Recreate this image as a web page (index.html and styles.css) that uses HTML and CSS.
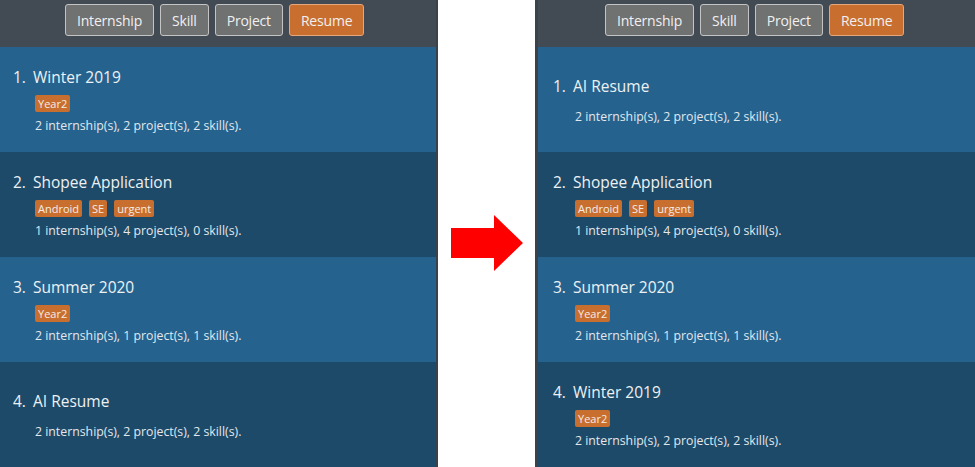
FILE: index.html
```html
<!DOCTYPE html>
<html>
<head>
<meta charset="utf-8">
<link rel="stylesheet" href="styles.css">
</head>
<body>
<div class="page">
  <section class="panel panel-left">
    <nav class="tabs">
      <span class="tab">Internship</span>
      <span class="tab">Skill</span>
      <span class="tab">Project</span>
      <span class="tab active">Resume</span>
    </nav>
    <ul class="list">
      <li class="cell light">
        <div class="title"><span class="num">1.</span>Winter 2019</div>
        <div class="tags"><span class="tag">Year2</span></div>
        <div class="desc">2 internship(s), 2 project(s), 2 skill(s).</div>
      </li>
      <li class="cell dark">
        <div class="title"><span class="num">2.</span>Shopee Application</div>
        <div class="tags"><span class="tag">Android</span><span class="tag">SE</span><span class="tag">urgent</span></div>
        <div class="desc">1 internship(s), 4 project(s), 0 skill(s).</div>
      </li>
      <li class="cell light">
        <div class="title"><span class="num">3.</span>Summer 2020</div>
        <div class="tags"><span class="tag">Year2</span></div>
        <div class="desc">2 internship(s), 1 project(s), 1 skill(s).</div>
      </li>
      <li class="cell dark">
        <div class="title"><span class="num">4.</span>AI Resume</div>
        <div class="desc">2 internship(s), 2 project(s), 2 skill(s).</div>
      </li>
    </ul>
  </section>
  <div class="gap">
    <svg class="arrow" width="72" height="56" viewBox="0 0 72 56"><polygon points="0,13 43,13 43,0 72,28 43,56 43,43 0,43" fill="#ff0000"/></svg>
  </div>
  <section class="panel panel-right">
    <nav class="tabs">
      <span class="tab">Internship</span>
      <span class="tab">Skill</span>
      <span class="tab">Project</span>
      <span class="tab active">Resume</span>
    </nav>
    <ul class="list">
      <li class="cell light">
        <div class="title"><span class="num">1.</span>AI Resume</div>
        <div class="desc">2 internship(s), 2 project(s), 2 skill(s).</div>
      </li>
      <li class="cell dark">
        <div class="title"><span class="num">2.</span>Shopee Application</div>
        <div class="tags"><span class="tag">Android</span><span class="tag">SE</span><span class="tag">urgent</span></div>
        <div class="desc">1 internship(s), 4 project(s), 0 skill(s).</div>
      </li>
      <li class="cell light">
        <div class="title"><span class="num">3.</span>Summer 2020</div>
        <div class="tags"><span class="tag">Year2</span></div>
        <div class="desc">2 internship(s), 1 project(s), 1 skill(s).</div>
      </li>
      <li class="cell dark">
        <div class="title"><span class="num">4.</span>Winter 2019</div>
        <div class="tags"><span class="tag">Year2</span></div>
        <div class="desc">2 internship(s), 2 project(s), 2 skill(s).</div>
      </li>
    </ul>
  </section>
</div>
</body>
</html>
```

FILE: styles.css
```css
* { box-sizing: border-box; }
html, body { margin: 0; padding: 0; background: #ffffff; }
body {
  font-family: "Open Sans", "Noto Sans", sans-serif;
  width: 975px;
  height: 467px;
  overflow: hidden;
}
.page {
  display: flex;
  height: 467px;
}
.panel {
  background: #424b53;
  display: flex;
  flex-direction: column;
  height: 467px;
}
.panel-left {
  width: 438px;
  border-right: 2px solid #3b4249;
}
.panel-right {
  width: 440px;
  border-left: 3px solid #3b4249;
}
.gap {
  width: 97px;
  display: flex;
  justify-content: center;
  padding-top: 215px;
}
.arrow { display: block; }
.tabs {
  height: 47px;
  display: flex;
  gap: 6px;
  padding-top: 4px;
}
.panel-left .tabs { padding-left: 65px; }
.panel-right .tabs { padding-left: 67px; }
.tab {
  height: 32px;
  display: flex;
  align-items: center;
  padding: 0 11px;
  background: #707171;
  border: 1px solid #c4c4c4;
  border-radius: 3px;
  color: #f0f0f0;
  font-size: 14px;
  letter-spacing: -0.2px;
}
.tab.active {
  background: #c86f30;
  border-color: #e6a57a;
}
.list {
  list-style: none;
  margin: 0;
  padding: 0;
}
.cell {
  height: 105px;
  display: flex;
  flex-direction: column;
  justify-content: center;
  padding-top: 2px;
}
.panel-left .cell { padding-left: 13px; }
.panel-right .cell { padding-left: 15px; }
.cell.light { background: #25638e; }
.cell.dark { background: #1d4a68; }
.title {
  color: #edf1f4;
  font-size: 15.5px;
  line-height: 24px;
  height: 24px;
  display: flex;
}
.num { width: 20px; }
.tags {
  display: flex;
  gap: 7px;
  margin: 6px 0 4px 22px;
}
.tag {
  background: #c86f30;
  color: #f4ece6;
  font-size: 11px;
  line-height: 17px;
  height: 17px;
  padding: 0 3px;
  border-radius: 2px;
}
.desc {
  color: #e2e8ee;
  font-size: 12.3px;
  line-height: 20px;
  height: 20px;
  margin-left: 22px;
}
.title + .desc { margin-top: 9px; }
```
